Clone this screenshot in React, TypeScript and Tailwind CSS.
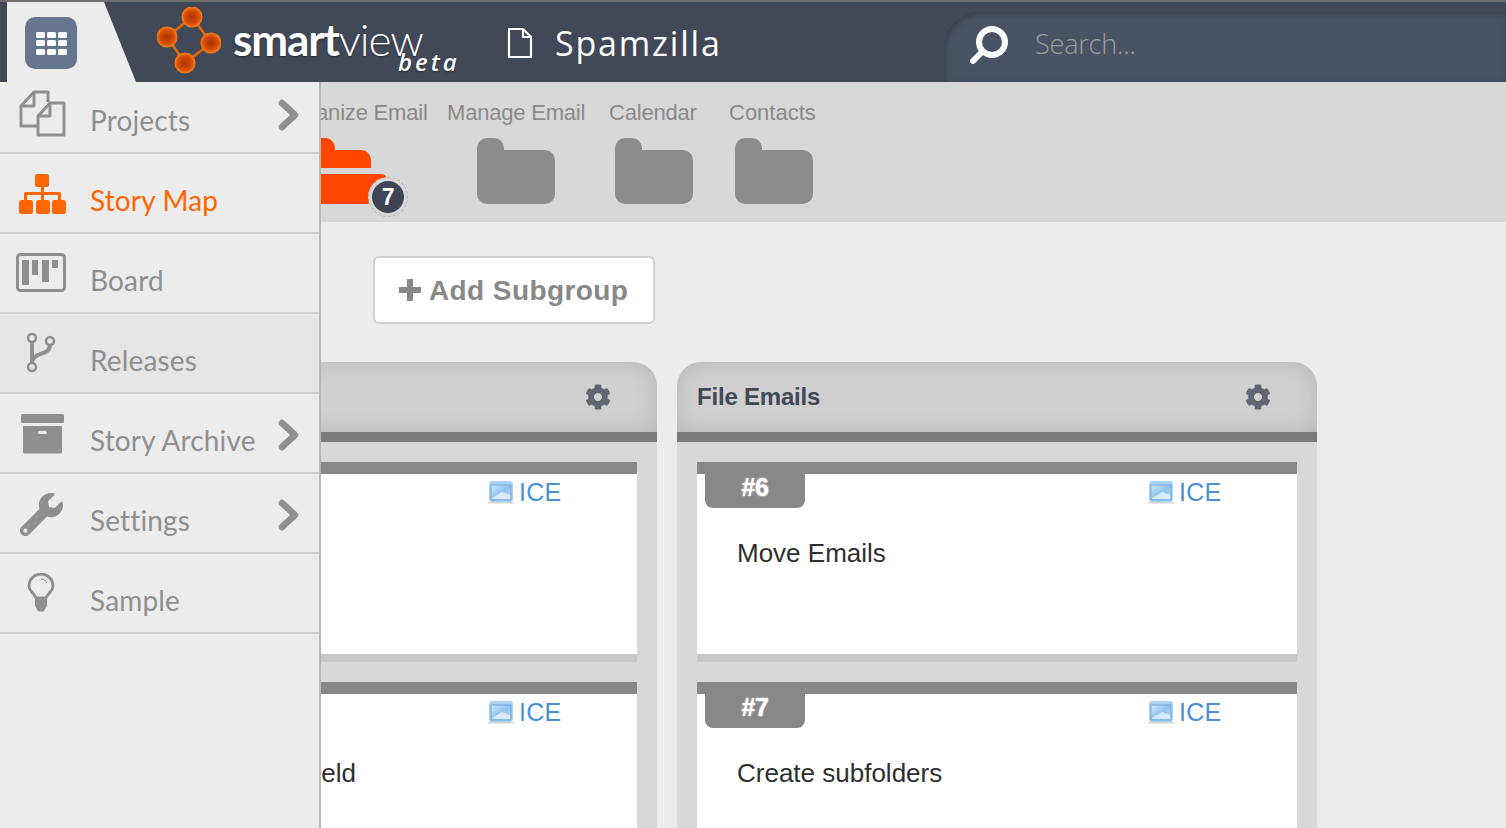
import React from "react";
import { FaCog, FaWrench } from "react-icons/fa";

const Chevron = ({ first }: { first?: boolean }) => (
  <svg width="24" height="32" viewBox="0 0 24 32" className={`absolute left-[277px] ${first ? "top-[17px]" : "top-[25px]"}`}>
    <polyline points="5,4 18,16 5,28" fill="none" stroke="#8f8f8f" strokeWidth="6.5" strokeLinecap="round" strokeLinejoin="round" />
  </svg>
);

const ProjectsIcon = () => (
  <svg width="48" height="48" viewBox="0 0 48 48" fill="none" stroke="#8f8f8f" strokeWidth="3" strokeLinejoin="round">
    <path d="M18 36H2V16L15 2H29V12" />
    <path d="M15 2V16H2" />
    <path d="M19 26L31 13H45V45H19Z" />
    <path d="M31 13V26H19" />
  </svg>
);

const MapIcon = () => (
  <svg width="48" height="40" viewBox="0 0 48 40" fill="#ff6600">
    <rect x="16" y="0" width="14" height="13" rx="2.5" />
    <rect x="0" y="26" width="14" height="14" rx="2.5" />
    <rect x="17" y="26" width="14" height="14" rx="2.5" />
    <rect x="33" y="26" width="14" height="14" rx="2.5" />
    <path d="M22 12h3v6h15a2 2 0 0 1 2 2v7h-3v-6H25v6h-3v-6H8v6H5v-7a2 2 0 0 1 2-2h15z" />
  </svg>
);

const BoardIcon = () => (
  <svg width="50" height="40" viewBox="0 0 50 40" fill="#8f8f8f">
    <rect x="1.5" y="1.5" width="47" height="36" rx="3" fill="none" stroke="#8f8f8f" strokeWidth="3" />
    <rect x="6" y="7" width="7" height="25" />
    <rect x="16" y="7" width="6" height="15" />
    <rect x="26" y="7" width="7" height="22" />
    <rect x="36" y="7" width="6" height="8" />
  </svg>
);

const BranchIcon = () => (
  <svg width="32" height="42" viewBox="0 0 32 42" fill="none" stroke="#8f8f8f" strokeWidth="2.5">
    <circle cx="6" cy="7" r="4" />
    <circle cx="24" cy="10" r="4" />
    <circle cx="6" cy="36" r="4" />
    <path d="M6 11V32" strokeWidth="4" />
    <path d="M24 14C24 25 8 20 6 31" strokeWidth="4" />
  </svg>
);

const ArchiveIcon = () => (
  <svg width="44" height="40" viewBox="0 0 44 40" fill="#8f8f8f">
    <rect x="0" y="0" width="43" height="9" rx="1.5" />
    <path d="M2 12H41V38a1.500 1.500 0 0 1-1.500 1.500H3.500A1.500 1.500 0 0 1 2 38Z" />
    <rect x="17" y="17" width="9" height="3" rx="1.5" fill="#ececec" />
  </svg>
);

const BulbIcon = () => (
  <svg width="28" height="40" viewBox="0 0 28 40">
    <path d="M9 25C7 20 2 18 2 13A12 12 0 0 1 26 13C26 18 21 20 19 25Z" fill="none" stroke="#8f8f8f" strokeWidth="2.800" strokeLinejoin="round" />
    <path d="M8 25H20V33L16.500 38.500H11.500L8 33Z" fill="#8f8f8f" />
    <path d="M14 6C17 6 19 8 20 10" fill="none" stroke="#8f8f8f" strokeWidth="1" />
  </svg>
);

const FolderIcon = ({ className = "" }: { className?: string }) => (
  <svg width="78" height="66" viewBox="0 0 78 66" className={className}>
    <path d="M0 10A10 10 0 0 1 10 0H17A10 10 0 0 1 27 10V12H68A10 10 0 0 1 78 22V56A10 10 0 0 1 68 66H10A10 10 0 0 1 0 56Z" fill="#8c8c8c" />
  </svg>
);

const OpenFolderIcon = () => (
  <svg width="100" height="66" viewBox="0 0 100 66">
    <path d="M0 10A10 10 0 0 1 10 0H33A10 10 0 0 1 42 10V12H68A10 10 0 0 1 78 22V30H0Z" fill="#ff4500" />
    <path d="M0 36H86Q95 36 93 42L85 57A12 12 0 0 1 73 66H0Z" fill="#ff4500" />
  </svg>
);

const IceIcon = () => (
  <svg width="26" height="24" viewBox="0 0 26 24">
    <defs>
      <linearGradient id="iceGrad" x1="0" y1="0" x2="1" y2="1">
        <stop offset="0" stopColor="#d4e9fa" />
        <stop offset="0.5" stopColor="#8fc3ee" />
        <stop offset="1" stopColor="#bfdcf5" />
      </linearGradient>
    </defs>
    <rect x="1" y="1" width="24" height="21" rx="3" fill="#a9d3f5" />
    <rect x="3" y="5" width="20" height="15" fill="url(#iceGrad)" stroke="#5b9fda" strokeWidth="0.800" />
    <path d="M4 18L14 12L22 15V19H4Z" fill="#e6f2fc" opacity="0.800" />
    <rect x="0" y="22" width="26" height="1.500" fill="#d5d5d5" />
  </svg>
);

const Logo = () => {
  const nodes = [
    [35, 10],
    [10, 30],
    [54, 36],
    [28, 56],
  ];
  return (
    <svg width="64" height="67" viewBox="0 0 64 67">
      <defs>
        <radialGradient id="ball" cx="0.500" cy="0.500" r="0.520">
          <stop offset="0" stopColor="#a83400" />
          <stop offset="0.650" stopColor="#d94c00" />
          <stop offset="1" stopColor="#ff8a1e" />
        </radialGradient>
      </defs>
      <g stroke="#e8690f" strokeWidth="2.500" fill="none">
        <path d="M35 10L10 30L28 56L54 36Z" />
      </g>
      {nodes.map(([x, y]) => (
        <circle key={x} cx={x} cy={y} r="10.500" fill="url(#ball)" />
      ))}
    </svg>
  );
};

const Row = ({
  icon,
  label,
  chevron,
  active,
  shaded,
  first,
  iconClass,
}: {
  icon: React.ReactNode;
  label: string;
  chevron?: boolean;
  active?: boolean;
  shaded?: boolean;
  first?: boolean;
  iconClass: string;
}) => (
  <div
    className={`relative flex shrink-0 items-center border-b-2 border-[#cfcfcf] ${first ? "h-[72px]" : "h-[80px]"} ${shaded ? "bg-[#e6e6e6]" : ""}`}
  >
    <div className={`flex shrink-0 ${iconClass}`}>{icon}</div>
    <span
      className={`absolute left-[90px] text-[28px] leading-[34px] tracking-[0.15px] font-['Lato',sans-serif] ${first ? "top-[21px]" : "top-[29px]"} ${active ? "text-[#ff6600]" : "text-[#8f8f8f]"}`}
    >
      {label}
    </span>
    {chevron && <Chevron first={first} />}
  </div>
);

const Card = ({ id, title }: { id: string; title: string }) => (
  <div className="flex h-[200px] shrink-0 flex-col bg-white">
    <div className="h-[12px] bg-[#888888]" />
    <div className="flex items-start">
      <div className="ml-[8px] flex h-[34px] w-[100px] items-center justify-center rounded-b-[8px] bg-[#888888] pb-[7px] text-[25px] font-bold tracking-[-0.5px] text-white [text-shadow:0_0_2px_#fff]">
        {id}
      </div>
      <div className="ml-[343px] mt-[6px] flex h-[24px] items-center">
        <IceIcon />
        <span className="ml-[5px] text-[25px] leading-[24px] tracking-[0.3px] text-[#4a90d2]">ICE</span>
      </div>
    </div>
    <div className="ml-[40px] mt-[30px] text-[26px] leading-[30px] text-[#2f2f2f]">{title}</div>
    <div className="mt-auto h-[8px] bg-[#c8c8c8]" />
  </div>
);

const Column = ({ title, cards }: { title: string; cards: { id: string; title: string }[] }) => (
  <div className="flex w-[640px] shrink-0 flex-col">
    <div className="flex h-[70px] items-center justify-between rounded-t-[24px] bg-[#d0d0d0] pl-[20px] pr-[46px] shadow-[inset_0_0_22px_rgba(0,0,0,0.13)]">
      <span className="text-[24px] font-bold tracking-[-0.2px] text-[#414857]">{title}</span>
      <FaCog className="text-[26px] text-[#5f6672]" />
    </div>
    <div className="h-[10px] bg-[#7b7b7b]" />
    <div className="flex flex-col gap-[20px] bg-[#d8d8d8] px-[20px] pb-[20px] pt-[20px]">
      {cards.map((c) => (
        <Card key={c.id} {...c} />
      ))}
    </div>
  </div>
);

export default function App() {
  return (
    <div className="relative flex h-screen w-full flex-col overflow-hidden bg-[#ececec] font-['Liberation_Sans',Arial,sans-serif]">
      <div className="h-[2px] shrink-0 bg-[#6e6e6e]" />
      <header className="flex h-[80px] shrink-0 bg-[#414857]">
        <div className="ml-[7px] flex w-[129px] shrink-0 items-start bg-[#ececec] pl-[18px] pt-[15px] [clip-path:polygon(0_0,97px_0,129px_100%,0_100%)]">
          <div className="flex h-[52px] w-[52px] items-center justify-center rounded-[10px] bg-[#68758f]">
            <div className="grid grid-cols-3 gap-x-[2px] gap-y-[2.500px]">
              {Array.from({ length: 9 }).map((_, i) => (
                <div key={i} className="h-[6px] w-[9px] rounded-[1.500px] bg-white" />
              ))}
            </div>
          </div>
        </div>
        <div className="ml-[21px] mt-[5px] shrink-0">
          <Logo />
        </div>
        <div className="relative ml-[12px] mt-[12px] h-[50px] w-[200px] shrink-0 whitespace-nowrap font-['Lato',sans-serif] text-[44px] leading-[50px] tracking-[-1.100px] text-white [text-shadow:0_1px_2px_rgba(0,0,0,0.4)]">
          <span className="font-bold">smart</span>
          <span className="font-light">view</span>
          <span className="absolute left-[165px] top-[34px] font-['Open_Sans',sans-serif] text-[24px] leading-[28px] font-semibold italic tracking-[3px]">beta</span>
        </div>
        <svg width="26" height="32" viewBox="0 0 26 32" fill="none" stroke="#fff" strokeWidth="2.200" strokeLinejoin="round" className="ml-[74px] mt-[25px] shrink-0">
          <path d="M2 2H16L24 10V30H2Z" />
          <path d="M16 2V10H24" />
        </svg>
        <div className="ml-[22px] mt-[18px] w-[166px] shrink-0 whitespace-nowrap font-['Open_Sans',sans-serif] text-[34px] leading-[46px] font-normal tracking-[1.800px] text-white">Spamzilla</div>
        <div className="ml-[223px] mt-[10px] flex min-w-0 flex-1 items-center rounded-tl-[36px] bg-[#4a5365] pl-[25px] shadow-[inset_2px_2px_6px_rgba(0,0,0,0.25)]">
          <svg width="40" height="40" viewBox="0 0 40 40" fill="none" stroke="#fff" className="shrink-0 -translate-y-[2px]">
            <circle cx="23" cy="17" r="13" strokeWidth="6" />
            <path d="M13 27L4 36" strokeWidth="6" strokeLinecap="round" />
          </svg>
          <span className="ml-[26px] -translate-y-[3px] font-['Open_Sans',sans-serif] text-[27px] font-light tracking-[-0.200px] text-[#9b9b9b]">Search...</span>
        </div>
      </header>

      <main className="flex min-h-0 flex-1 flex-col">
        <nav className="flex h-[140px] shrink-0 bg-[#d8d8d8] pl-[280px] pt-[18px] text-[22px] leading-[26px] tracking-[-0.200px] text-[#8a8a8a]">
          <div className="w-[148px] shrink-0">
            <div className="whitespace-nowrap">Organize Email</div>
            <div className="relative ml-[13px] mt-[12px]">
              <OpenFolderIcon />
              <div className="absolute left-[75px] top-[39px] flex h-[40px] w-[40px] items-center justify-center rounded-full border border-dashed border-[#b5b5b5] bg-[#d8d8d8]">
                <div className="flex h-[32px] w-[32px] items-center justify-center rounded-full bg-[#3d4556] text-[23px] font-bold text-white">7</div>
              </div>
            </div>
          </div>
          <div className="ml-[19px] w-[137px] shrink-0">
            <div className="whitespace-nowrap">Manage Email</div>
            <FolderIcon className="ml-[30px] mt-[12px]" />
          </div>
          <div className="ml-[25px] w-[88px] shrink-0">
            <div className="whitespace-nowrap">Calendar</div>
            <FolderIcon className="ml-[6px] mt-[12px]" />
          </div>
          <div className="ml-[32px] w-[87px] shrink-0">
            <div className="whitespace-nowrap tracking-[0px]">Contacts</div>
            <FolderIcon className="ml-[6px] mt-[12px]" />
          </div>
        </nav>

        <div className="ml-[373px] mt-[34px] flex h-[68px] w-[282px] shrink-0 items-center rounded-[6px] border-2 border-[#cfcfcf] bg-white pl-[24px] text-[28px] font-bold tracking-[0.400px] text-[#888888]">
          <svg width="22" height="22" viewBox="0 0 22 22" fill="#888888" className="shrink-0">
            <path d="M8 0H14V8H22V14H14V22H8V14H0V8H8Z" />
          </svg>
          <span className="ml-[8px] translate-y-[1px]">Add Subgroup</span>
        </div>

        <div className="ml-[17px] mt-[38px] flex gap-[20px]">
          <Column
            title="Organize"
            cards={[
              { id: "#4", title: "Sort Emails" },
              { id: "#5", title: "Type a new custom field" },
            ]}
          />
          <Column
            title="File Emails"
            cards={[
              { id: "#6", title: "Move Emails" },
              { id: "#7", title: "Create subfolders" },
            ]}
          />
        </div>
      </main>

      <aside className="absolute bottom-0 left-0 top-[82px] flex w-[321px] flex-col border-r-2 border-[#b8b8b0] bg-[#ececec]">
        <Row first label="Projects" chevron icon={<ProjectsIcon />} iconClass="ml-[19px] -mt-[6px]" />
        <Row active label="Story Map" icon={<MapIcon />} iconClass="ml-[19px] mt-[1px]" />
        <Row label="Board" icon={<BoardIcon />} iconClass="ml-[16px] mt-0" />
        <Row shaded label="Releases" icon={<BranchIcon />} iconClass="ml-[26px] -mt-[2px]" />
        <Row label="Story Archive" chevron icon={<ArchiveIcon />} iconClass="ml-[21px] mt-[1px]" />
        <Row label="Settings" chevron icon={<FaWrench className="h-[43px] w-[43px] text-[#8f8f8f]" />} iconClass="ml-[20px] mt-[2px]" />
        <Row label="Sample" icon={<BulbIcon />} iconClass="ml-[27px] mt-0" />
      </aside>
    </div>
  );
}
